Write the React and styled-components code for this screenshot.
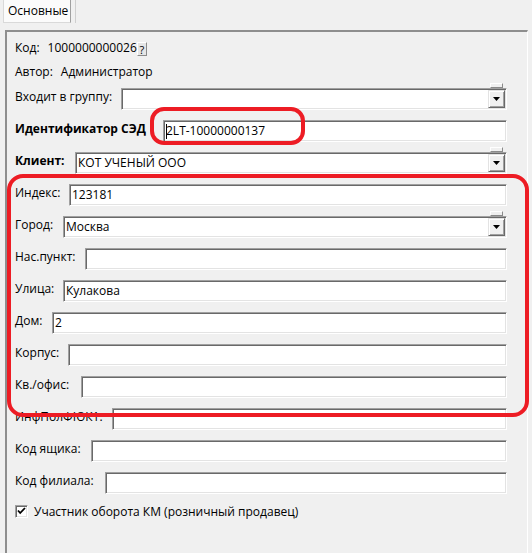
import React from "react";
import styled, { createGlobalStyle } from "styled-components";

const Global = createGlobalStyle`
  html, body { margin: 0; padding: 0; background: #f0f0f0; overflow: hidden; }
  body { font-family: "Open Sans", "DejaVu Sans", sans-serif; font-size: 12px; color: #000; }
`;

const Page = styled.div`
  width: 532px;
  height: 553px;
  overflow: hidden;
  display: flex;
  flex-direction: column;
`;

const TabStrip = styled.div`
  height: 30px;
  display: flex;
  align-items: flex-start;
  padding-left: 3px;
  box-sizing: border-box;
`;

const Tab = styled.div`
  width: 68px;
  height: 23px;
  box-sizing: border-box;
  border: 1px solid #d9d9d9;
  border-right-color: #a0a0a0;
  border-top: none;
  background: #fbfbfb;
  padding-left: 4px;
  line-height: 22px;
`;

const TabEdge = styled.div`
  width: 1px;
  height: 23px;
  margin-left: 4px;
  background: #cfcfcf;
`;

const Panel = styled.div`
  position: relative;
  margin-left: 5px;
  width: 523px;
  flex: 1;
  box-sizing: border-box;
  border-top: 2px solid #8e8e8e;
  border-left: 2px solid #8e8e8e;
  border-right: 1px solid #ffffff;
  padding: 8px 20px 0 8px;
  display: flex;
  flex-direction: column;
`;

const InfoRow = styled.div`
  height: 16px;
  display: flex;
  align-items: center;
  gap: 8px;
  margin-bottom: 8px;
  line-height: 16px;
  white-space: nowrap;
`;

const Value = styled.span`
  display: inline-flex;
  align-items: center;
`;

const HelpButton = styled.span`
  display: inline-block;
  width: 10px;
  height: 14px;
  box-sizing: border-box;
  background: #e6e6e6;
  border: 1px solid;
  border-color: #ffffff #8a8a8a #8a8a8a #ffffff;
  font-size: 11px;
  line-height: 13px;
  text-align: center;
  margin-top: 2px;
`;

const Fields = styled.div`
  display: flex;
  flex-direction: column;
  gap: 10px;
`;

const Row = styled.div`
  height: 22px;
  display: flex;
  align-items: flex-start;
`;

const Label = styled.div`
  width: ${(p) => p.$w}px;
  flex: none;
  padding-top: 1px;
  line-height: 16px;
  white-space: nowrap;
  font-weight: ${(p) => (p.$bold ? 700 : 400)};
`;

const Sunken = styled.div`
  position: relative;
  flex: 1;
  height: 22px;
  box-sizing: border-box;
  background: #fff;
  border: 1px solid;
  border-color: #a0a0a0 #ffffff #ffffff #a0a0a0;
  box-shadow: inset 1px 1px 0 #696969, inset -1px -1px 0 #e3e3e3;
  padding: 1px 1px 1px 2px;
  display: flex;
  align-items: center;
`;

const FieldText = styled.span`
  flex: 1;
  line-height: 18px;
  white-space: nowrap;
  overflow: hidden;
  display: flex;
  align-items: center;
`;

const Caret = styled.span`
  display: inline-block;
  width: 1px;
  height: 15px;
  background: #000;
  margin-right: -1px;
`;

const DropButton = styled.div`
  width: 17px;
  align-self: stretch;
  box-sizing: border-box;
  background: #f0f0f0;
  border: 1px solid;
  border-color: #e3e3e3 #696969 #696969 #e3e3e3;
  box-shadow: inset 1px 1px 0 #ffffff, inset -1px -1px 0 #a0a0a0;
  display: flex;
  align-items: center;
  justify-content: center;
`;

const StubTab = styled.div`
  position: absolute;
  top: -6px;
  right: 3px;
  width: 13px;
  height: 5px;
  box-sizing: border-box;
  background: #f0f0f0;
  border: 1px solid;
  border-color: #ffffff #8a8a8a #8a8a8a #ffffff;
`;

const CheckRow = styled.div`
  margin-top: 9px;
  height: 16px;
  display: flex;
  align-items: center;
  gap: 6px;
  white-space: nowrap;
`;

const CheckBox = styled.div`
  width: 13px;
  height: 13px;
  box-sizing: border-box;
  background: #fff;
  border: 1px solid;
  border-color: #a0a0a0 #ffffff #ffffff #a0a0a0;
  box-shadow: inset 1px 1px 0 #696969, inset -1px -1px 0 #e3e3e3;
  display: flex;
  align-items: center;
  justify-content: center;
`;

const Mark = styled.div`
  position: absolute;
  left: ${(p) => p.$x}px;
  top: ${(p) => p.$y}px;
  width: ${(p) => p.$w}px;
  height: ${(p) => p.$h}px;
  box-sizing: border-box;
  border: 4px solid #ed1c24;
  border-radius: ${(p) => p.$r}px;
  pointer-events: none;
`;

const Arrow = () => (
  <svg width="7" height="4" viewBox="0 0 7 4">
    <polygon points="0,0 7,0 3.5,4" fill="#000" />
  </svg>
);

const Field = ({ label, w, bold, value, combo, caret }) => (
  <Row>
    <Label $w={w} $bold={bold}>{label}</Label>
    <Sunken>
      <FieldText>
        {caret && <Caret />}
        {value}
      </FieldText>
      {combo && (
        <>
          <StubTab />
          <DropButton>
            <Arrow />
          </DropButton>
        </>
      )}
    </Sunken>
  </Row>
);

export default function App() {
  return (
    <Page>
      <Global />
      <TabStrip>
        <Tab>Основные</Tab>
        <TabEdge />
      </TabStrip>
      <Panel>
        <InfoRow>
          <span>Код:</span>
          <Value>
            1000000000026
            <HelpButton>?</HelpButton>
          </Value>
        </InfoRow>
        <InfoRow>
          <span>Автор:</span>
          <Value>Администратор</Value>
        </InfoRow>
        <Fields>
          <Field label="Входит в группу:" w={106} combo />
          <Field label="Идентификатор СЭД" w={148} bold value="2LT-10000000137" caret />
          <Field label="Клиент:" w={60} bold value="КОТ УЧЕНЫЙ ООО" combo />
          <Field label="Индекс:" w={54} value="123181" />
          <Field label="Город:" w={48} value="Москва" combo />
          <Field label="Нас.пункт:" w={70} />
          <Field label="Улица:" w={48} value="Кулакова" />
          <Field label="Дом:" w={37} value="2" />
          <Field label="Корпус:" w={53} />
          <Field label="Кв./офис:" w={66} />
          <Field label="ИнфПолФЮК1:" w={97} />
          <Field label="Код ящика:" w={76} />
          <Field label="Код филиала:" w={90} />
        </Fields>
        <CheckRow>
          <CheckBox>
            <svg width="9" height="8" viewBox="0 0 9 8">
              <path d="M1 3.5 L3.2 6 L8 1" stroke="#000" strokeWidth="1.8" fill="none" />
            </svg>
          </CheckBox>
          <span>Участник оборота КМ (розничный продавец)</span>
        </CheckRow>
        <Mark $x={143} $y={75} $w={155} $h={38} $r={14} />
        <Mark $x={0} $y={142} $w={522} $h={243} $r={16} />
      </Panel>
    </Page>
  );
}
